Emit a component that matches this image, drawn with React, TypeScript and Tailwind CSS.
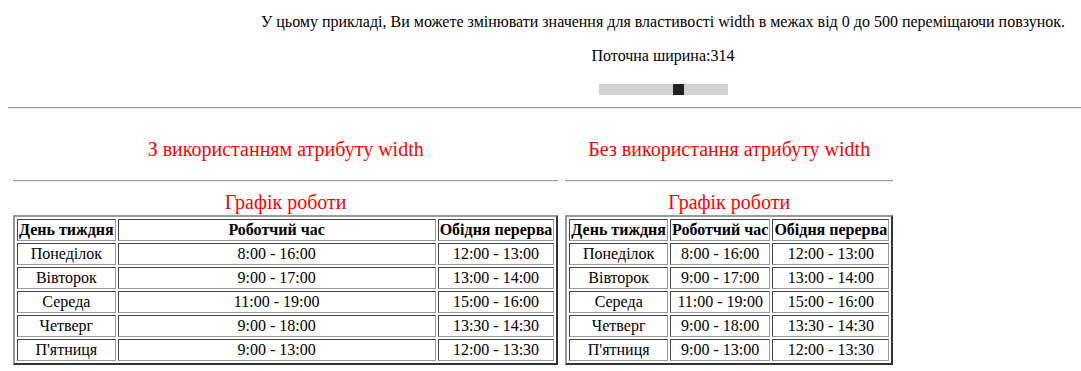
import { FunctionComponent } from "react";

const rows = [
    ["Понеділок", "8:00 - 16:00", "12:00 - 13:00"],
    ["Вівторок", "9:00 - 17:00", "13:00 - 14:00"],
    ["Середа", "11:00 - 19:00", "15:00 - 16:00"],
    ["Четверг", "9:00 - 18:00", "13:30 - 14:30"],
    ["П'ятниця", "9:00 - 13:00", "12:00 - 13:30"],
]

const th = "px-px py-px font-bold border border-t-[#444] border-l-[#444] border-b-[#9a9a9a] border-r-[#9a9a9a]"
const td = "px-px py-px text-center border border-t-[#444] border-l-[#444] border-b-[#9a9a9a] border-r-[#9a9a9a]"

interface ScheduleProps {
    colWidth?: number
}

const Schedule: FunctionComponent<ScheduleProps> = ({ colWidth }) => {
    return (
        <div className="w-fit">
            <div className="text-center text-[20px] leading-[24px] text-[#ff0000] h-[24px] -mt-px mb-px">Графік роботи</div>
            <table className="border-separate border-spacing-[2px] border-2 border-t-[#999] border-l-[#999] border-b-[#333] border-r-[#333] text-[16px] leading-[18px]">
                <thead>
                    <tr>
                        <th className={th}>День тиждня</th>
                        <th className={`${th} box-content`} style={colWidth ? { width: colWidth } : undefined}>Роботчий час</th>
                        <th className={th}>Обідня перерва</th>
                    </tr>
                </thead>
                <tbody>
                    {rows.map(r => (
                        <tr key={r[0]}>
                            <td className={td}>{r[0]}</td>
                            <td className={td}>{r[1]}</td>
                            <td className={td}>{r[2]}</td>
                        </tr>
                    ))}
                </tbody>
            </table>
        </div>
    )
}

const Hr = ({ className = "" }: { className?: string }) => (
    <div className={`border-t border-b border-t-[#9a9a9a] border-b-[#eeeeee] ${className}`} />
)

export default function App() {
    const width = 314
    return (
        <div className="bg-white text-black w-[1081px] h-[371px] overflow-hidden font-['Liberation_Serif','Times_New_Roman',serif]">
            <div className="pt-[13px] pl-[245px] text-center text-[16px] leading-[18px]">
                <p>У цьому прикладі, Ви можете змінювати значення для властивості width в межах від 0 до 500 переміщаючи повзунок.</p>
                <p className="mt-[16px]">Поточна ширина:{width}</p>
                <div className="mt-[19px] flex justify-center">
                    <div className="relative w-[129px] h-[11px] bg-[#d3d3d3]">
                        <div className="absolute top-0 left-[74px] w-[11px] h-[11px] bg-[#222222]" />
                    </div>
                </div>
            </div>
            <Hr className="ml-[8px] mt-[12px]" />
            <div className="flex gap-[7px] pl-[13px]">
                <div className="w-fit">
                    <div className="mt-[29px] h-[22px] text-center text-[20px] leading-[22px] text-[#ff0000]">З використанням атрибуту width</div>
                    <Hr className="mt-[20px] mb-[9px]" />
                    <Schedule colWidth={width} />
                </div>
                <div className="w-fit">
                    <div className="mt-[29px] h-[22px] text-center text-[20px] leading-[22px] text-[#ff0000]">Без використання атрибуту width</div>
                    <Hr className="mt-[20px] mb-[9px]" />
                    <Schedule />
                </div>
            </div>
        </div>
    )
}
